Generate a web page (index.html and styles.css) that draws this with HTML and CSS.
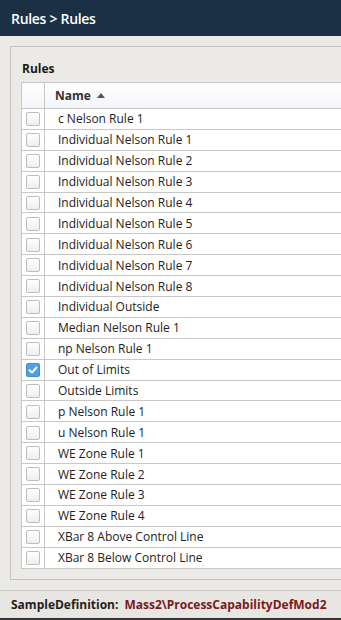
FILE: index.html
```html
<!DOCTYPE html>
<html lang="en">
<head>
    <meta charset="UTF-8">
    <meta name="viewport" content="width=device-width, initial-scale=1.0">
    <title>Rules</title>
    <link rel="stylesheet" href="styles.css">
</head>
<body>
    <header class="topbar">
        <h1>Rules &gt; Rules</h1>
    </header>
    <div class="content">
        <div class="panel">
            <h2 class="panel-title">Rules</h2>
            <table class="grid">
                <thead>
                    <tr>
                        <th class="check-col"></th>
                        <th class="name-col">Name <span class="sort-arrow"></span></th>
                    </tr>
                </thead>
                <tbody>
                    <tr><td class="check-col"><span class="box"></span></td><td>c Nelson Rule 1</td></tr>
                    <tr><td class="check-col"><span class="box"></span></td><td>Individual Nelson Rule 1</td></tr>
                    <tr><td class="check-col"><span class="box"></span></td><td>Individual Nelson Rule 2</td></tr>
                    <tr><td class="check-col"><span class="box"></span></td><td>Individual Nelson Rule 3</td></tr>
                    <tr><td class="check-col"><span class="box"></span></td><td>Individual Nelson Rule 4</td></tr>
                    <tr><td class="check-col"><span class="box"></span></td><td>Individual Nelson Rule 5</td></tr>
                    <tr><td class="check-col"><span class="box"></span></td><td>Individual Nelson Rule 6</td></tr>
                    <tr><td class="check-col"><span class="box"></span></td><td>Individual Nelson Rule 7</td></tr>
                    <tr><td class="check-col"><span class="box"></span></td><td>Individual Nelson Rule 8</td></tr>
                    <tr><td class="check-col"><span class="box"></span></td><td>Individual Outside</td></tr>
                    <tr><td class="check-col"><span class="box"></span></td><td>Median Nelson Rule 1</td></tr>
                    <tr><td class="check-col"><span class="box"></span></td><td>np Nelson Rule 1</td></tr>
                    <tr>
                        <td class="check-col">
                            <span class="box checked">
                                <svg width="14" height="14" viewBox="0 0 14 14"><path d="M3.5 7.3 L6 9.6 L10.5 4.5" fill="none" stroke="#fff" stroke-width="2" stroke-linecap="round" stroke-linejoin="round"/></svg>
                            </span>
                        </td>
                        <td>Out of Limits</td>
                    </tr>
                    <tr><td class="check-col"><span class="box"></span></td><td>Outside Limits</td></tr>
                    <tr><td class="check-col"><span class="box"></span></td><td>p Nelson Rule 1</td></tr>
                    <tr><td class="check-col"><span class="box"></span></td><td>u Nelson Rule 1</td></tr>
                    <tr><td class="check-col"><span class="box"></span></td><td>WE Zone Rule 1</td></tr>
                    <tr><td class="check-col"><span class="box"></span></td><td>WE Zone Rule 2</td></tr>
                    <tr><td class="check-col"><span class="box"></span></td><td>WE Zone Rule 3</td></tr>
                    <tr><td class="check-col"><span class="box"></span></td><td>WE Zone Rule 4</td></tr>
                    <tr><td class="check-col"><span class="box"></span></td><td>XBar 8 Above Control Line</td></tr>
                    <tr><td class="check-col"><span class="box"></span></td><td>XBar 8 Below Control Line</td></tr>
                </tbody>
            </table>
        </div>
    </div>
    <footer class="statusbar">
        <span class="status-label">SampleDefinition:</span>
        <span class="status-value">Mass2\ProcessCapabilityDefMod2</span>
    </footer>
</body>
</html>
```

FILE: styles.css
```css
body {
    font-family: "Open Sans", "Noto Sans", sans-serif;
    background-color: #eceae6;
    margin: 0;
    padding: 0;
    width: 341px;
    height: 620px;
    overflow: hidden;
    display: flex;
    flex-direction: column;
}
.topbar {
    background-color: #1b2f45;
    color: white;
    height: 36px;
    display: flex;
    align-items: center;
    padding: 0 11px;
    box-sizing: border-box;
}
.topbar h1 {
    margin: 0;
    font-size: 14px;
    font-weight: 600;
    letter-spacing: -0.3px;
}
.content {
    padding: 10px 0 0 10px;
    height: 544px;
    box-sizing: border-box;
}
.panel {
    border: 1px solid #c4c4c4;
    border-right: none;
    height: 534px;
    box-sizing: border-box;
    padding: 0 0 0 10px;
}
.panel-title {
    margin: 0;
    font-size: 12px;
    font-weight: 700;
    color: #1a1a1a;
    padding: 13px 0 4px 1px;
    line-height: 18px;
}
.grid {
    border-collapse: collapse;
    width: 330px;
    background: white;
    font-size: 12px;
    color: #222;
}
.grid th,
.grid td {
    border: 1px solid #c8c8c8;
    border-right: none;
    padding: 0;
    text-align: left;
}
.grid thead th {
    height: 25px;
    background: linear-gradient(#ffffff, #f2f4f7);
    font-weight: 700;
    color: #333;
}
.grid tbody td {
    height: 19.9px;
    line-height: 19px;
}
.check-col {
    width: 22px;
    text-align: center;
}
.grid td.check-col {
    text-align: center;
}
.grid th.name-col {
    padding-left: 10px;
}
.grid tbody td + td {
    padding-left: 13px;
}
.sort-arrow {
    display: inline-block;
    width: 0;
    height: 0;
    border-left: 4px solid transparent;
    border-right: 4px solid transparent;
    border-bottom: 5px solid #555;
    margin-left: 3px;
    vertical-align: 2px;
}
.box {
    display: inline-block;
    width: 14px;
    height: 14px;
    border: 1px solid #bdbdbd;
    border-radius: 2px;
    background: linear-gradient(#ffffff, #eeeeee);
    vertical-align: middle;
    box-sizing: border-box;
    margin-top: -2px;
}
.box.checked {
    background: #4aa0ea;
    border-color: #3d8fd8;
}
.box svg {
    display: block;
    margin: -1px;
}
.statusbar {
    margin-top: 10px;
    height: 30px;
    border-top: 1px solid #c9c9c9;
    border-bottom: 2px solid #333;
    box-sizing: border-box;
    background: #e8e6e2;
    display: flex;
    align-items: center;
    padding: 0 11px;
    font-size: 12px;
    font-weight: 700;
    gap: 6px;
}
.status-label {
    color: #1e1e1e;
}
.status-value {
    color: #7a1a1a;
}
```
